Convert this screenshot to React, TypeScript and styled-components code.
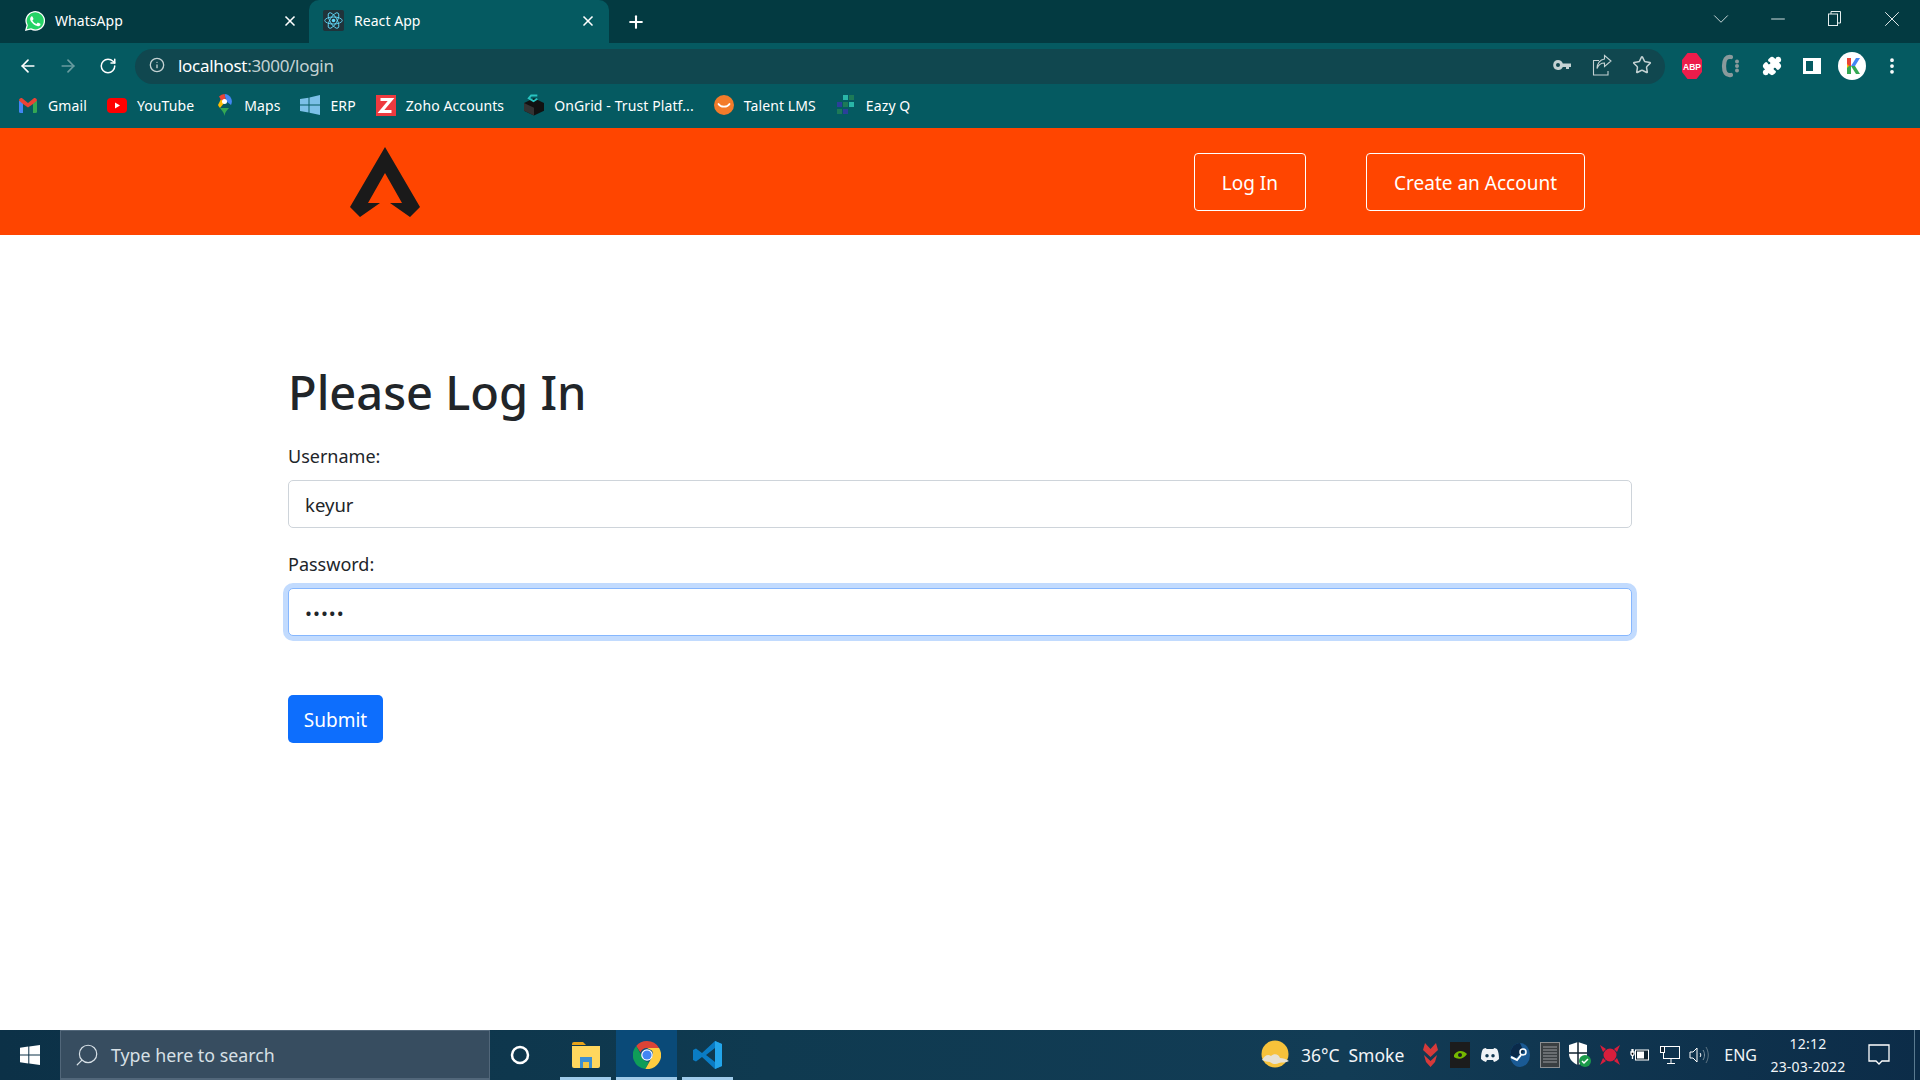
import React from "react";
import styled, { createGlobalStyle } from "styled-components";
import { ArrowLeft, ArrowRight, RotateCw, Info, Star, Plus, X, ChevronDown, Minus, Search, Puzzle, MoreVertical } from "lucide-react";

const Global = createGlobalStyle`
  html, body { margin: 0; padding: 0; background: #fff; }
  * { box-sizing: border-box; }
  body { font-family: "Noto Sans", "Open Sans", sans-serif; }
`;

const Shell = styled.div`display: flex; flex-direction: column; height: 1080px; overflow: hidden;`;

const TabStrip = styled.div`display: flex; height: 43px; background: #033a41; color: #fff;`;
const Tab = styled.div<{ $active?: boolean; $width: number; $pl: number; $pr: number; $gap: number }>`
  display: flex; align-items: center; width: ${p => p.$width}px; padding: 0 ${p => p.$pr}px 2px ${p => p.$pl}px; gap: ${p => p.$gap}px;
  background: ${p => (p.$active ? "#055a61" : "transparent")};
  border-radius: ${p => (p.$active ? "10px 10px 0 0" : "0")};
  font-size: 14px; letter-spacing: 0.05px;
`;
const TabTitle = styled.span`flex: 1;`;
const TabClose = styled.span`display: flex; width: 20px; justify-content: center;`;
const NewTab = styled.div`display: flex; width: 54px; align-items: center; justify-content: center;`;
const Grow = styled.div`flex: 1;`;
const WinBtn = styled.div`display: flex; width: 57px; align-items: center; justify-content: center; padding-bottom: 6px; color: #e6eeee;`;

const Toolbar = styled.div`display: flex; align-items: center; height: 43px; padding: 3px 8px 0; background: #055a61; color: #fff;`;
const Slot = styled.div<{ $dim?: boolean }>`display: flex; width: 40px; height: 36px; align-items: center; justify-content: center; opacity: ${p => (p.$dim ? 0.4 : 1)};`;
const Address = styled.div`
  flex: 1; display: flex; align-items: center; height: 35px; margin: 0 7px; padding: 0 3px 2px 12px;
  border-radius: 18px; background: #10474f; color: #c4d2d3; font-size: 17px; letter-spacing: -0.3px;
`;
const InfoSlot = styled.span`display: flex; width: 20px; margin-right: 11px; justify-content: center;`;
const Host = styled.span`color: #fff;`;
const AddrIcon = styled.div`display: flex; width: 40px; align-items: center; justify-content: center; color: #c4d2d3;`;
const AddrIcons = styled.div`display: flex; margin-left: auto;`;

const Bookmarks = styled.div`display: flex; align-items: center; height: 42px; padding: 0 0 4px 18px; background: #055a61; color: #fff; font-size: 14px; letter-spacing: 0.1px; gap: 20px;`;
const Bookmark = styled.div`display: flex; align-items: center; gap: 10px;`;
const BookmarkIcon = styled.span`display: flex; width: 20px; justify-content: center;`;

const SiteHeader = styled.header`display: flex; align-items: center; height: 107px; padding: 0 335px 0 350px; background: #ff4500;`;
const HeaderNav = styled.nav`display: flex; margin-left: auto; gap: 60px;`;
const NavButton = styled.a`
  display: flex; align-items: center; height: 58px; padding: 3px 27px 0; border: 1px solid #fff; border-radius: 4px;
  color: #fff; font-size: 19px;
`;

const Main = styled.main`flex: 1; padding: 127px 288px 0; background: #fff; color: #212529;`;
const Title = styled.h1`margin: 0 0 19px; font-size: 47px; line-height: 60px; font-weight: 500;`;
const Field = styled.div`margin-bottom: 21px;`;
const Label = styled.label`display: block; margin-bottom: 9px; font-size: 18px; line-height: 30px;`;
const Input = styled.input<{ $focus?: boolean }>`
  display: block; width: 100%; height: 48px; padding: 0 16px; font: inherit; font-size: 18.5px; color: #212529;
  letter-spacing: ${p => (p.$focus ? "1px" : "0")};
  border: 1px solid ${p => (p.$focus ? "#86b7fe" : "#ced4da")}; border-radius: 5px; outline: none;
  box-shadow: ${p => (p.$focus ? "0 0 0 5px rgba(13,110,253,.25)" : "none")};
`;
const Submit = styled.button`
  display: block; width: 95px; height: 48px; margin-top: 59px; padding: 2px 0 0; border: 0; border-radius: 5px; background: #0d6efd;
  color: #fff; font: inherit; font-size: 19px;
`;

const Taskbar = styled.footer`
  display: flex; align-items: stretch; height: 50px; color: #f1f5f8;
  background: linear-gradient(90deg, #0c3147 0%, #0f3a50 40%, #123c55 70%, #0c2c48 100%);
`;
const StartBtn = styled.div`display: flex; width: 60px; align-items: center; justify-content: center;`;
const SearchBox = styled.div`
  display: flex; align-items: center; width: 430px; padding-left: 13px; gap: 11px; background: #374d60;
  border: 1px solid #52677a; border-bottom-width: 2px; font-size: 17.8px; color: #d7e0e6;
`;
const FlippedIcon = styled.span`display: flex; transform: scaleX(-1);`;
const Cortana = styled.div`display: flex; width: 65px; align-items: center; justify-content: center; padding-right: 5px;`;
const AppBtn = styled.div<{ $active?: boolean }>`
  position: relative; display: flex; width: 61px; align-items: center; justify-content: center;
  background: ${p => (p.$active ? "#0a4a78" : "transparent")};
  &::after { content: ""; position: absolute; bottom: 0; height: 3px; left: ${p => (p.$active ? 0 : "5px")}; right: ${p => (p.$active ? 0 : "5px")}; background: #9fcbea; }
`;
const Weather = styled.div`display: flex; align-items: center; margin-right: 11px; font-size: 17.5px; gap: 11px;`;
const WeatherText = styled.span`display: flex; gap: 9px;`;
const TrayIcon = styled.div`display: flex; width: 30px; align-items: center; justify-content: center;`;
const Lang = styled.div`display: flex; align-items: center; margin: 0 6px 0 9px; font-size: 16px;`;
const Clock = styled.div`display: flex; width: 90px; flex-direction: column; align-items: center; justify-content: center; font-size: 14px; line-height: 23px; letter-spacing: 0.2px;`;
const Notify = styled.div`display: flex; width: 52px; align-items: center; justify-content: center;`;
const Peek = styled.div`width: 6px; margin-left: 9px; border-left: 1px solid #5a7a90;`;

const Logo = () => (
  <svg width="70" height="70" viewBox="30 17 70 70"><path fill="#1a1a1a" d="M65 17 100 77 90 87 70 73 82 73 65 43 48 73 60 73 40 87 30 77Z" /></svg>
);
const WhatsApp = () => (
  <svg width="22" height="22" viewBox="0 0 24 24"><path fill="#25d366" stroke="#fff" strokeWidth="1.4" d="M2 22l1.500-5.400A10 10 0 1 1 7.500 20.600Z" /><path fill="#fff" d="M8.700 6.800c-.3 0-.7.100-1 .5-.4.500-1 1.200-1 2.500 0 1.400 1 2.800 1.200 3 .2.200 2 3 4.800 4.200 2.300.9 2.800.7 3.300.7.500-.1 1.600-.7 1.800-1.300.2-.6.2-1.200.2-1.300-.1-.2-.3-.2-.6-.4l-1.900-.9c-.3-.1-.5-.1-.7.200l-.9 1.100c-.2.200-.3.200-.6.100-1.700-.8-2.900-1.500-4-3.400-.2-.3 0-.4.100-.6l.9-1.200c.1-.2 0-.4 0-.5l-.9-2.100c-.2-.5-.4-.4-.6-.4Z" /></svg>
);
const ReactFav = () => (
  <svg width="21" height="21" viewBox="0 0 24 24"><rect width="24" height="24" rx="2" fill="#20333a" /><g fill="none" stroke="#61dafb" strokeWidth="1"><ellipse cx="12" cy="12" rx="10" ry="4" /><ellipse cx="12" cy="12" rx="10" ry="4" transform="rotate(60 12 12)" /><ellipse cx="12" cy="12" rx="10" ry="4" transform="rotate(120 12 12)" /></g><circle cx="12" cy="12" r="2" fill="#61dafb" /></svg>
);
const KeyIcon = () => (
  <svg width="18" height="18" viewBox="0 0 18 18" fill="#c4d2d3"><path clipRule="evenodd" fillRule="evenodd" d="M5 4a5 5 0 0 1 4.800 3.500H18V11h-2v2h-3v-2H9.800A5 5 0 1 1 5 4Zm0 3a2 2 0 1 0 0 4 2 2 0 0 0 0-4Z" /></svg>
);
const ShareIcon = () => (
  <svg width="20" height="22" viewBox="0 0 20 22" fill="none" stroke="#c4d2d3" strokeWidth="1.100"><path d="M7 6.500H1.500V21H16v-4" /><path d="M12.500 1.500 19 7l-6.500 5.500V9C9 9 6.500 10.500 5 14.500 5 9.500 8 5.500 12.500 5Z" /></svg>
);
const Abp = () => (
  <svg width="22" height="26" viewBox="0 0 22 26"><path fill="#ed1c4b" d="M6.500 0h9L21 7v12l-5.500 7h-9L1 19V7Z" /><text x="11" y="16.500" fontSize="8.500" fontWeight="700" fill="#fff" textAnchor="middle" fontFamily="Liberation Sans">ABP</text></svg>
);
const CExt = () => (
  <svg width="22" height="26" viewBox="0 0 22 26"><path fill="none" stroke="#8a9a9c" strokeWidth="4.200" strokeLinecap="round" d="M10 4C5 3 3 7 3 13s2 10 7 9" /><g fill="#8a9a9c"><circle cx="16" cy="8.500" r="2" /><circle cx="16" cy="13" r="2" /><circle cx="16" cy="17.500" r="2" /></g></svg>
);
const SidePanel = () => (
  <svg width="18" height="18" viewBox="0 0 18 18"><path fill="#fff" fillRule="evenodd" d="M0 1h18v16H0Zm3 3v10h7V4Z" /></svg>
);
const Avatar = () => (
  <svg width="28" height="28" viewBox="0 0 28 28"><circle cx="14" cy="14" r="14" fill="#fff" /><path fill="#34a853" d="M9 14h4v8H9Z" /><path fill="#ea4335" d="M9 6h4v8H9Z" /><path fill="#fbbc05" d="M11 14 9 12v4Z" /><path fill="#4285f4" d="M13 14 18 6h4l-5 8Z" /><path fill="#34a853" d="M13 14 18 22h4l-5-8Z" /></svg>
);
const Restore = () => (
  <svg width="13" height="15" viewBox="0 0 13 15" fill="none" stroke="#e6eeee"><rect x=".5" y="3" width="9" height="11.500" /><path d="M3 3V.5h9.500V12H9.500" /></svg>
);
const Gmail = () => (
  <svg width="18" height="15" viewBox="0 0 18 15"><path fill="#4285f4" d="M0 3h4v12H1.500A1.500 1.500 0 0 1 0 13.500Z" /><path fill="#34a853" d="M14 3h4v10.500a1.500 1.500 0 0 1-1.500 1.500H14Z" /><path fill="#ea4335" d="M0 2.500C0 .5 2 -.5 3.500.5L9 5l5.500-4.500C16-.5 18 .5 18 2.500L14 6 9 9.500 4 6Z" /></svg>
);
const YouTube = () => (
  <svg width="20" height="15" viewBox="0 0 20 15"><rect width="20" height="15" rx="4" fill="#f00" /><path fill="#fff" d="M8 4.500l5 3-5 3Z" /></svg>
);
const Maps = () => (
  <svg width="15" height="22" viewBox="0 0 15 22"><path fill="#34a853" d="M3 14c2 3 4 4 4.500 8 .5-4 2-5 4.500-8Z" /><path fill="#fbbc05" d="M1 11a7.500 7.500 0 0 0 2 3l5-6-4-3Z" /><path fill="#4285f4" d="M7.500 0A7.500 7.500 0 0 1 14 11L9 7Z" /><path fill="#ea4335" d="M2 2.500A7.500 7.500 0 0 1 7.500 0L9 7 4 6Z" /><circle cx="7.500" cy="7.500" r="2.500" fill="#fff" /></svg>
);
const Erp = () => (
  <svg width="20" height="20" viewBox="0 0 20 20" fill="#7cc0e8"><path d="M0 4 8.500 2.800V9.500H0ZM9.500 2.600 20 0V9.500H9.500ZM0 10.500H8.500V17.500L0 16ZM9.500 10.500H20V20L9.500 17.800Z" /></svg>
);
const Zoho = () => (
  <svg width="20" height="21" viewBox="0 0 20 21"><rect width="20" height="21" fill="#ee3a3f" /><path fill="none" stroke="#fff" strokeWidth="3.200" d="M4.500 4.500h10.500L5 16.500h10.500" /></svg>
);
const OnGrid = () => (
  <svg width="21" height="22" viewBox="0 0 21 22"><path fill="#111" d="M0 9l10.500-5L21 9v8l-10.500 5L0 17Z" /><path fill="#333" d="M0 9l10.500 5v8L0 17Z" /><path fill="none" stroke="#29c4c0" strokeWidth="2" d="M14 1H7.500L5 4l5 3 4-2.500" /></svg>
);
const Talent = () => (
  <svg width="20" height="20" viewBox="0 0 20 20"><circle cx="10" cy="10" r="10" fill="#f37b2a" /><path fill="none" stroke="#fff" strokeWidth="1.800" strokeLinecap="round" d="M4.500 9c2 3.500 9 3.500 11 0" /></svg>
);
const Eazy = () => (
  <svg width="18" height="20" viewBox="0 0 18 20"><g fill="#2b3f9a"><rect x="0" y="7" width="5" height="5" /><rect x="6" y="14" width="5" height="5" /></g><g fill="#29b6a8"><rect x="6" y="0" width="5" height="5" /><rect x="12" y="7" width="5" height="5" /></g><g fill="#1d7a57"><rect x="12" y="0" width="5" height="5" /><rect x="6" y="7" width="5" height="5" /><rect x="0" y="14" width="5" height="5" /></g></svg>
);
const WinLogo = () => (
  <svg width="20" height="20" viewBox="0 0 20 20" fill="#fff"><path d="M0 2.800 8.300 1.600V9.500H0ZM9.300 1.500 20 0V9.500H9.300ZM0 10.500H8.300V18.400L0 17.200ZM9.300 10.500H20V20L9.300 18.500Z" /></svg>
);
const Folder = () => (
  <svg width="28" height="26" viewBox="0 0 28 26"><path fill="#e8a317" d="M0 2a2 2 0 0 1 2-2h9l3 3H0Z" /><path fill="#ffd75e" d="M0 4h28v20a2 2 0 0 1-2 2H2a2 2 0 0 1-2-2Z" /><path fill="#3d8fd1" d="M8 15h12v11h-3v-6h-6v6H8Z" /><rect x="11" y="20" width="6" height="6" fill="#f4c542" /></svg>
);
const Chrome = () => (
  <svg width="28" height="28" viewBox="0 0 28 28"><path fill="#db4437" d="M14 0a14 14 0 0 1 12.100 7H14a7 7 0 0 0-6.600 4.600L3.200 5A14 14 0 0 1 14 0Z" /><path fill="#0f9d58" d="M3.200 5 9 15.500a7 7 0 0 0 7 5.300L12.400 28A14 14 0 0 1 3.200 5Z" /><path fill="#ffcd40" d="M26.100 7A14 14 0 0 1 12.400 28L18.500 17A7 7 0 0 0 19 9.500L14 7Z" /><circle cx="14" cy="14" r="5.800" fill="#fff" /><circle cx="14" cy="14" r="4.600" fill="#4285f4" /></svg>
);
const VsCode = () => (
  <svg width="30" height="30" viewBox="0 0 30 30"><path fill="#0a7cc4" d="M22 1 9 13 3 8.500 0 10v10l3 1.500L9 17l13 12 7-3V4ZM22 8v14l-9-7Z" /><path fill="#23a5ea" d="M22 1l7 3v22l-7 3Z" /></svg>
);
const Sun = () => (
  <svg width="30" height="32" viewBox="0 0 30 32"><circle cx="15" cy="15" r="13.500" fill="#f7c23a" /><path fill="#e8e2d2" d="M2 21c3-5 6-6 9-4 3-3 8-2 9 2 3 0 6 1 9 3-3 2-7 1-10 2-3 2-7 1-9-1-3 0-5-1-8-2Z" /></svg>
);
const Vanguard = () => (
  <svg width="15" height="24" viewBox="0 0 15 24"><path fill="#d63a3a" d="M2 0 7.500 6 13 0l2 7-7.500 7L0 7ZM1 12l6.500 6L14 12l-2 7-4.500 5L3 19Z" /></svg>
);
const Nvidia = () => (
  <svg width="20" height="26" viewBox="0 0 20 26"><rect width="20" height="26" fill="#1c1c1c" /><path fill="#76b900" d="M4 13c3-5 9-5 13-1-3 5-9 6-13 3Z" /><circle cx="10" cy="13" r="2" fill="#1c1c1c" /></svg>
);
const Discord = () => (
  <svg width="18" height="14" viewBox="0 0 18 14"><path fill="#f0f3f6" fillRule="evenodd" d="M5 0C3.500.3 2 1 2 1 .5 3.500 0 7 0 11c1.500 1.500 3.500 2.500 5 3l1-2h6l1 2c1.500-.5 3.500-1.500 5-3 0-4-.5-7.500-2-10 0 0-1.500-.7-3-1l-.5 1h-7ZM6 6a1.700 1.700 0 1 1 0 3.500A1.700 1.700 0 0 1 6 6Zm6 0a1.700 1.700 0 1 1 0 3.500A1.700 1.700 0 0 1 12 6Z" /></svg>
);
const Steam = () => (
  <svg width="20" height="24" viewBox="0 0 20 24"><ellipse cx="10" cy="12" rx="10" ry="12" fill="#1a5a94" /><path fill="#0a2a4a" d="M10 0a10 12 0 0 0-10 12l6 3 3-3 5-3-4-9Z" /><circle cx="13" cy="9" r="3" fill="none" stroke="#fff" strokeWidth="1.500" /><path stroke="#fff" strokeWidth="2" d="M1 14l6 3 4-5" fill="none" /></svg>
);
const BoxIcon = () => (
  <svg width="20" height="26" viewBox="0 0 20 26"><rect x=".5" y=".5" width="19" height="25" fill="#3a3f42" stroke="#8b8f92" /><g stroke="#9a9da0"><path d="M3 5h14M3 8h14M3 11h14M3 14h14M3 17h14M3 20h14" /></g></svg>
);
const Shield = () => (
  <svg width="22" height="26" viewBox="0 0 22 26"><path fill="#fff" d="M9 0 18 3v9c0 5-4 9-9 11-5-2-9-6-9-11V3Z" /><path stroke="#10222f" strokeWidth="1.500" d="M9 0v23M0 11h18" /><circle cx="16" cy="19" r="6" fill="#1a9a4a" /><path fill="none" stroke="#fff" strokeWidth="1.500" d="M13 19l2 2 4-4" /></svg>
);
const RedIcon = () => (
  <svg width="22" height="24" viewBox="0 0 22 24"><circle cx="11" cy="12" r="6.500" fill="#d81e3c" /><g fill="#d81e3c"><path d="M1 2l6 4-3 3ZM21 2l-6 4 3 3ZM1 22l6-4-3-3ZM21 22l-6-4 3-3Z" /></g></svg>
);
const Battery = () => (
  <svg width="20" height="14" viewBox="0 0 20 14"><rect x="5.500" y="2" width="13" height="10" fill="#10222f" stroke="#fff" /><rect x="7" y="3.500" width="7" height="7" fill="#fff" /><path stroke="#fff" strokeWidth="1.300" d="M1 4h3v2a1.500 1.500 0 0 1-3 0ZM2 1v3M3 1v3M2.500 8v3" /></svg>
);
const Network = () => (
  <svg width="20" height="20" viewBox="0 0 20 20" fill="none" stroke="#fff"><rect x="3.500" y="1.500" width="16" height="12" /><path d="M11 14v4M7 18.500h8" /><rect x=".5" y="1.500" width="4" height="6" fill="#10222f" /></svg>
);
const Speaker = () => (
  <svg width="22" height="20" viewBox="0 0 22 20" fill="none" stroke="#fff"><path d="M1 7h3l4-4v14l-4-4H1Z" /><path d="M11 8c1 1 1 3 0 4" /><path d="M14 5c2 3 2 7 0 10" stroke="#7d929f" /><path d="M17 2c3 5 3 11 0 16" stroke="#5e7584" /></svg>
);
const NotifyIcon = () => (
  <svg width="22" height="22" viewBox="0 0 22 22" fill="none" stroke="#fff" strokeWidth="1.300"><path d="M1 1h20v16h-7l-3 3-3-3H1Z" /></svg>
);

const iconProps = { size: 20, strokeWidth: 2 };
const bookmarks: [React.ReactNode, string][] = [
  [<Gmail />, "Gmail"], [<YouTube />, "YouTube"], [<Maps />, "Maps"], [<Erp />, "ERP"],
  [<Zoho />, "Zoho Accounts"], [<OnGrid />, "OnGrid - Trust Platf..."], [<Talent />, "Talent LMS"], [<Eazy />, "Eazy Q"],
];
const tray = [<Vanguard />, <Nvidia />, <Discord />, <Steam />, <BoxIcon />, <Shield />, <RedIcon />, <Battery />, <Network />, <Speaker />];

export default function App() {
  return (
    <Shell>
      <Global />
      <TabStrip>
        <Tab $width={309} $pl={24} $pr={9} $gap={9}>
          <WhatsApp /><TabTitle>WhatsApp</TabTitle><TabClose><X size={16} strokeWidth={2.5} /></TabClose>
        </Tab>
        <Tab $active $width={300} $pl={14} $pr={11} $gap={10}>
          <ReactFav /><TabTitle>React App</TabTitle><TabClose><X size={16} strokeWidth={2.5} /></TabClose>
        </Tab>
        <NewTab><Plus size={20} strokeWidth={2.5} /></NewTab>
        <Grow />
        <WinBtn><ChevronDown size={26} strokeWidth={0.8} /></WinBtn>
        <WinBtn><Minus size={22} strokeWidth={1} /></WinBtn>
        <WinBtn><Restore /></WinBtn>
        <WinBtn><X size={26} strokeWidth={0.9} /></WinBtn>
      </TabStrip>
      <Toolbar>
        <Slot><ArrowLeft {...iconProps} /></Slot>
        <Slot $dim><ArrowRight {...iconProps} /></Slot>
        <Slot><RotateCw size={18} strokeWidth={2} /></Slot>
        <Address>
          <InfoSlot><Info size={16} /></InfoSlot>
          <Host>localhost</Host>:3000/login
          <AddrIcons>
            <AddrIcon><KeyIcon /></AddrIcon>
            <AddrIcon><ShareIcon /></AddrIcon>
            <AddrIcon><Star size={20} strokeWidth={1.8} /></AddrIcon>
          </AddrIcons>
        </Address>
        <Slot><Abp /></Slot>
        <Slot><CExt /></Slot>
        <Slot><Puzzle size={20} fill="#fff" /></Slot>
        <Slot><SidePanel /></Slot>
        <Slot><Avatar /></Slot>
        <Slot><MoreVertical size={20} strokeWidth={2.5} /></Slot>
      </Toolbar>
      <Bookmarks>
        {bookmarks.map(([icon, name]) => (
          <Bookmark key={name}><BookmarkIcon>{icon}</BookmarkIcon>{name}</Bookmark>
        ))}
      </Bookmarks>
      <SiteHeader>
        <Logo />
        <HeaderNav>
          <NavButton>Log In</NavButton>
          <NavButton>Create an Account</NavButton>
        </HeaderNav>
      </SiteHeader>
      <Main>
        <Title>Please Log In</Title>
        <Field>
          <Label>Username:</Label>
          <Input type="text" defaultValue="keyur" />
        </Field>
        <Field>
          <Label>Password:</Label>
          <Input $focus type="password" defaultValue="keyur" />
        </Field>
        <Submit>Submit</Submit>
      </Main>
      <Taskbar>
        <StartBtn><WinLogo /></StartBtn>
        <SearchBox><FlippedIcon><Search size={26} strokeWidth={1.1} /></FlippedIcon>Type here to search</SearchBox>
        <Cortana><svg width="20" height="20" viewBox="0 0 20 20"><circle cx="10" cy="10" r="8" fill="none" stroke="#fff" strokeWidth="2.500" /></svg></Cortana>
        <AppBtn><Folder /></AppBtn>
        <AppBtn $active><Chrome /></AppBtn>
        <AppBtn><VsCode /></AppBtn>
        <Grow />
        <Weather><Sun /><WeatherText><span>36°C</span><span>Smoke</span></WeatherText></Weather>
        {tray.map((icon, i) => <TrayIcon key={i}>{icon}</TrayIcon>)}
        <Lang>ENG</Lang>
        <Clock><span>12:12</span><span>23-03-2022</span></Clock>
        <Notify><NotifyIcon /></Notify>
        <Peek />
      </Taskbar>
    </Shell>
  );
}
